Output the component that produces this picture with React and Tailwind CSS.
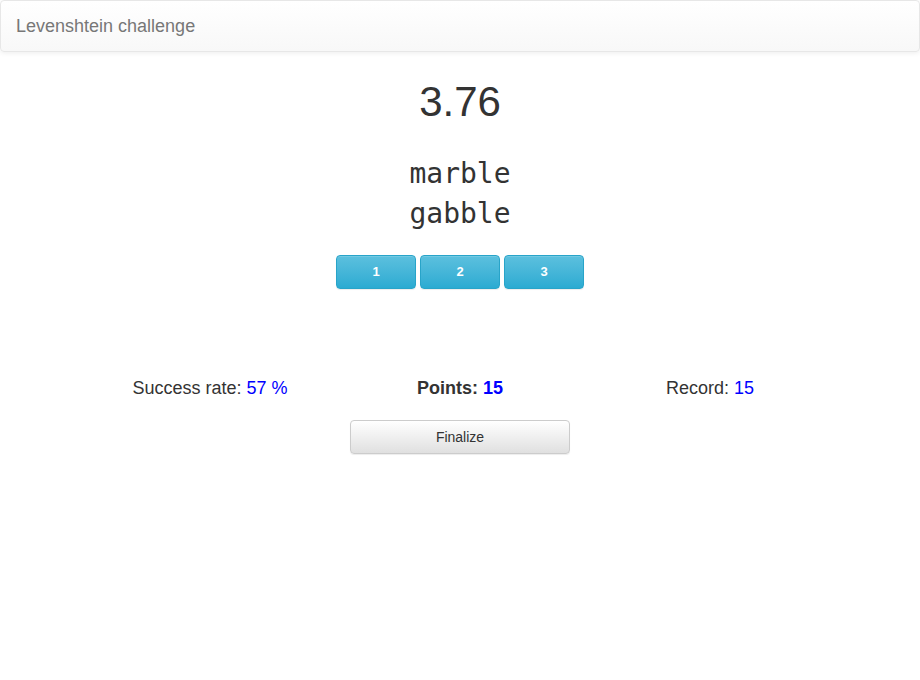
export default function App() {
  return (
    <div className="min-h-[680px] bg-white text-[14px] text-[#333]" style={{ fontFamily: '"Liberation Sans", Arial, sans-serif' }}>
      <nav className="flex h-[52px] items-center rounded-[4px] border border-[#e7e7e7] bg-gradient-to-b from-white to-[#f8f8f8] px-[15px] shadow-[0_1px_5px_rgba(0,0,0,0.075)]">
        <span className="text-[18px] text-[#777]">Levenshtein challenge</span>
      </nav>

      <div className="mx-auto w-[750px]">
        <h1 className="mt-[25px] text-center text-[42px] leading-[50px] text-[#333]">3.76</h1>

        <div
          className="mt-[27px] text-center text-[28px] leading-[40px] text-[#333]"
          style={{ fontFamily: '"DejaVu Sans Mono", monospace' }}
        >
          <div>marble</div>
          <div>gabble</div>
        </div>

        <div className="mt-[21px] flex justify-center gap-[4px]">
          {['1', '2', '3'].map((n) => (
            <button
              key={n}
              type="button"
              className="h-[34px] w-[80px] rounded-[4px] border border-[#28a4c9] bg-gradient-to-b from-[#5bc0de] to-[#2aabd2] text-[13px] font-bold text-white shadow-[inset_0_1px_0_rgba(255,255,255,0.15),0_1px_1px_rgba(0,0,0,0.075)]"
            >
              {n}
            </button>
          ))}
        </div>

        <div className="mt-[88px] grid grid-cols-3 text-center text-[18px] leading-[22px]">
          <div>
            Success rate: <span className="text-[#0000ff]">57 %</span>
          </div>
          <div className="font-bold">
            Points: <span className="text-[#0000ff]">15</span>
          </div>
          <div>
            Record: <span className="text-[#0000ff]">15</span>
          </div>
        </div>

        <div className="mt-[21px] flex justify-center">
          <button
            type="button"
            className="h-[34px] w-[220px] rounded-[4px] border border-[#ccc] bg-gradient-to-b from-white to-[#e0e0e0] text-[14px] text-[#333] shadow-[inset_0_1px_0_rgba(255,255,255,0.15),0_1px_1px_rgba(0,0,0,0.075)]"
          >
            Finalize
          </button>
        </div>
      </div>
    </div>
  );
}
